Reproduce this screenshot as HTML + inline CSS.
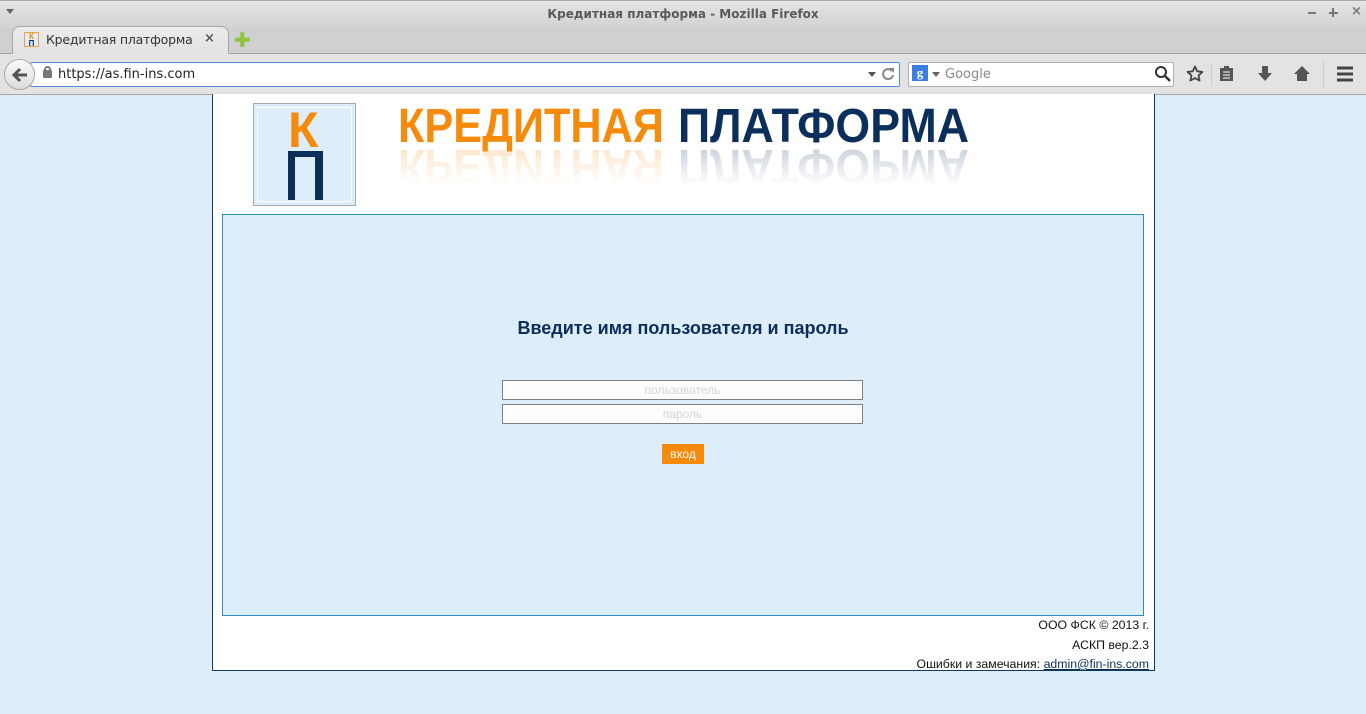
<!DOCTYPE html>
<html><head><meta charset="utf-8"><style>
*{margin:0;padding:0;box-sizing:border-box}
body{width:1366px;height:714px;overflow:hidden;background:#deedfa;font-family:"Liberation Sans",sans-serif;position:relative}
.abs{position:absolute}
#title{left:0;top:0;width:1366px;height:28px;background:linear-gradient(#e4e4e4,#d2d2d2);border-top:1px solid #a8a8a8;text-align:center;font:bold 12px "DejaVu Sans",sans-serif;color:#5a5a5a;line-height:26px}
#tabs{left:0;top:28px;width:1366px;height:26px;background:#d0d0d0;border-bottom:1px solid #a0a0a0}
#tab{left:12px;top:26px;width:217px;height:28px;background:linear-gradient(#ececec,#e2e2e2);border:1px solid #a8a8a8;border-bottom:none;border-radius:8px 8px 0 0}
#nav{left:0;top:54px;width:1366px;height:41px;background:#e3e3e3;border-bottom:1px solid #a8a8a8}
#url{left:30px;top:62px;width:870px;height:25px;background:#fff;border:1px solid #4a90d9;border-radius:2px}
#search{left:908px;top:62px;width:266px;height:25px;background:#fff;border:1px solid #b0b0b0;border-radius:2px}
#back{left:4px;top:59px;width:31px;height:31px;border-radius:50%;background:linear-gradient(#fafafa,#dcdcdc);border:1px solid #a8a8a8}
#page{left:212px;top:94px;width:943px;height:577px;background:#fff;border:1px solid #0c3a6e;border-top:none}
#panel{left:222px;top:214px;width:922px;height:402px;background:#deedfa;border:1px solid #2a8fc0}
input{position:absolute;left:502px;width:361px;height:20px;border:1px solid #808080;background:#fdfdfd;text-align:center;font:12px "Liberation Sans",sans-serif;color:#ccc}
input::placeholder{color:#d4d4d4;opacity:1}
.wc{position:absolute;top:12px;height:2px;background:#777}
</style></head><body>
<div id="title" class="abs">Кредитная платформа - Mozilla Firefox</div>
<div class="abs" style="left:6px;top:9px;width:0;height:0;border-left:4px solid transparent;border-right:4px solid transparent;border-top:5px solid #666"></div>
<div class="wc" style="left:1308px;width:8px"></div>
<div class="wc" style="left:1329px;width:9px"></div>
<div class="abs" style="left:1332px;top:8px;width:2px;height:9px;background:#777"></div>
<div class="abs" style="left:1351px;top:4px;font:bold 13px 'DejaVu Sans';color:#777">×</div>
<div id="tabs" class="abs"></div>
<div id="tab" class="abs"></div>
<div class="abs" style="left:24px;top:32px;width:15px;height:15px;border:1px solid #f0a040;background:#e0eefa;font:bold 8px 'Liberation Sans';color:#f08a00;text-align:center;line-height:7px">К<br><span style="color:#0c2e5a">П</span></div>
<div class="abs" style="left:46px;top:32px;font:12.5px 'DejaVu Sans',sans-serif;color:#333;letter-spacing:-0.2px">Кредитная платформа</div>
<div class="abs" style="left:204px;top:31px;font:bold 13px 'DejaVu Sans';color:#555">×</div>
<div class="abs" style="left:234px;top:31px;font:bold 20px 'DejaVu Sans';color:#8cc43c;line-height:18px">✚</div>
<div id="nav" class="abs"></div>
<div id="url" class="abs"></div>
<div id="back" class="abs"><svg width="31" height="31"><path d="M22 15H10M15 9l-6 6 6 6" stroke="#555" stroke-width="3" fill="none"/></svg></div>
<div class="abs" style="left:43px;top:70px;width:9px;height:8px;background:#777;border-radius:1px"></div>
<div class="abs" style="left:44px;top:66px;width:7px;height:7px;border:2px solid #777;border-radius:4px 4px 0 0"></div>
<div class="abs" style="left:58px;top:67px;font:13px 'DejaVu Sans',sans-serif;color:#222">https://as.fin-ins.com</div>
<div class="abs" style="left:868px;top:72px;border-left:4px solid transparent;border-right:4px solid transparent;border-top:5px solid #555"></div>
<svg class="abs" style="left:881px;top:67px" width="14" height="14"><path d="M11 4A5 5 0 1 0 12 8" stroke="#888" stroke-width="2" fill="none"/><path d="M8 1h5v5z" fill="#888"/></svg>
<div id="search" class="abs"></div>
<div class="abs" style="left:912px;top:65px;width:16px;height:16px;background:#3b7de0;color:#fff;font:bold 13px 'Liberation Serif';text-align:center;line-height:15px">g</div>
<div class="abs" style="left:932px;top:72px;border-left:4px solid transparent;border-right:4px solid transparent;border-top:5px solid #666"></div>
<div class="abs" style="left:945px;top:67px;font:13px 'DejaVu Sans';color:#888">Google</div>
<svg class="abs" style="left:1154px;top:65px" width="18" height="18"><circle cx="7" cy="7" r="5" stroke="#333" stroke-width="2" fill="none"/><path d="M11 11l5 5" stroke="#333" stroke-width="2.5"/></svg>
<svg class="abs" style="left:1186px;top:65px" width="18" height="18"><path d="M9 1.5l2.2 4.8 5.2.6-3.9 3.5 1.1 5.2L9 13l-4.6 2.6 1.1-5.2L1.6 6.9l5.2-.6z" stroke="#444" stroke-width="1.8" fill="none" stroke-linejoin="round"/></svg>
<div class="abs" style="left:1211px;top:64px;width:1px;height:22px;background:#ccc"></div>
<svg class="abs" style="left:1218px;top:65px" width="18" height="18"><rect x="2" y="3" width="13" height="13" fill="#555"/><rect x="6" y="1" width="5" height="3" fill="#555"/><path d="M5 7h7M5 10h7M5 13h7" stroke="#fff"/></svg>
<svg class="abs" style="left:1256px;top:65px" width="18" height="18"><path d="M6 1h6v7h4l-7 8-7-8h4z" fill="#555"/></svg>
<svg class="abs" style="left:1293px;top:65px" width="18" height="18"><path d="M9 1l8 8h-3v7H4V9H1z" fill="#555"/></svg>
<div class="abs" style="left:1323px;top:60px;width:1px;height:28px;background:#ccc"></div>
<svg class="abs" style="left:1336px;top:66px" width="18" height="16"><path d="M1 2h16M1 8h16M1 14h16" stroke="#444" stroke-width="3"/></svg>
<div id="page" class="abs"></div>
<div class="abs" style="left:253px;top:103px;width:103px;height:103px;border:1px solid #a8a8a8;background:#deedfa;padding:3px"><div style="width:95px;height:95px;border:1px solid #fff"></div></div>
<div class="abs" style="left:288px;top:110px;width:35px;height:40px;font:bold 50px/40px 'Liberation Sans';color:#f68a0a">К</div>
<div class="abs" style="left:288px;top:151px;width:35px;height:6px;background:#0c2e5a"></div>
<div class="abs" style="left:288px;top:157px;width:7px;height:43px;background:#0c2e5a"></div>
<div class="abs" style="left:315px;top:157px;width:8px;height:43px;background:#0c2e5a"></div>
<svg class="abs" style="left:390px;top:100px" width="590" height="85">
<defs><linearGradient id="f" x1="0" y1="0" x2="0" y2="1"><stop offset="0" stop-color="#fff" stop-opacity="0"/><stop offset="1" stop-color="#fff" stop-opacity="1"/></linearGradient></defs>
<text x="8" y="42" font-family="Liberation Sans Narrow, Liberation Sans" font-weight="bold" font-size="48" fill="#f68a0a" textLength="266" lengthAdjust="spacingAndGlyphs">КРЕДИТНАЯ</text>
<text x="288" y="42" font-family="Liberation Sans Narrow, Liberation Sans" font-weight="bold" font-size="48" fill="#0c2e5a" textLength="291" lengthAdjust="spacingAndGlyphs">ПЛАТФОРМА</text>
<g transform="translate(0,92) scale(1,-1)" opacity="0.2">
<text x="8" y="42" font-family="Liberation Sans Narrow, Liberation Sans" font-weight="bold" font-size="48" fill="#f68a0a" textLength="266" lengthAdjust="spacingAndGlyphs">КРЕДИТНАЯ</text>
<text x="288" y="42" font-family="Liberation Sans Narrow, Liberation Sans" font-weight="bold" font-size="48" fill="#0c2e5a" textLength="291" lengthAdjust="spacingAndGlyphs">ПЛАТФОРМА</text></g>
<rect x="0" y="50" width="590" height="35" fill="url(#f)"/>
</svg>
<div id="panel" class="abs"></div>
<div class="abs" style="left:222px;top:318px;width:922px;text-align:center;font:bold 18px 'Liberation Sans';color:#0c2e5a">Введите имя пользователя и пароль</div>
<input style="top:380px" placeholder="пользователь" value="">
<input style="top:404px" placeholder="пароль" value="">
<div class="abs" style="left:662px;top:444px;width:42px;height:20px;background:#f68a0a;color:#fff;font:12px/20px 'Liberation Sans';text-align:center">вход</div>
<div class="abs" style="left:800px;top:616px;width:349px;text-align:right;font:12.3px/19.5px 'Liberation Sans';color:#111">ООО ФСК © 2013 г.<br>АСКП вер.2.3<br>Ошибки и замечания: <span style="color:#0c2e5a;text-decoration:underline">admin@fin-ins.com</span></div>
</body></html>
